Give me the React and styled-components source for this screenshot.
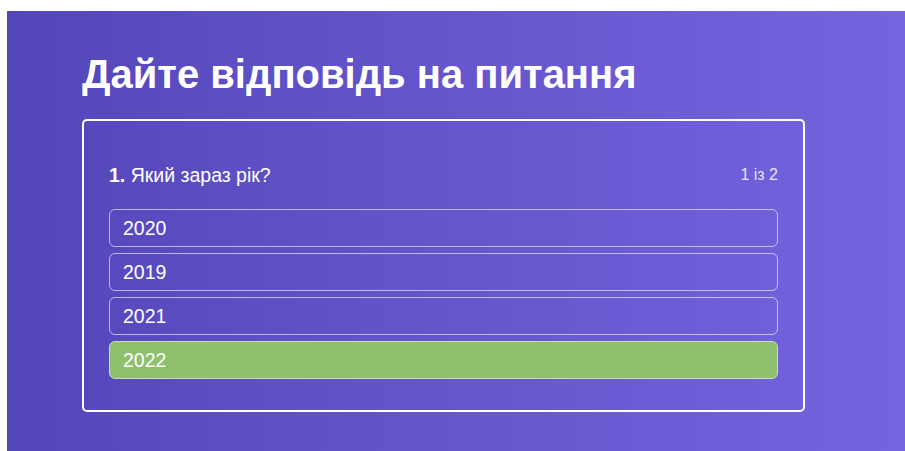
import React from "react";
import styled, { createGlobalStyle } from "styled-components";

const GlobalStyle = createGlobalStyle`
  body {
    margin: 0;
    background: #fff;
    font-family: "Liberation Sans", Arial, sans-serif;
  }
`;

const Page = styled.div`
  margin: 11px 0 0 7px;
  min-height: 440px;
  box-sizing: border-box;
  padding: 40px 0 0 75px;
  background: linear-gradient(90deg, #5346b9 0%, #6556cd 50%, #7464df 100%);
  color: #fff;
`;

const Title = styled.h1`
  margin: 0 0 22px;
  font-size: 40px;
  line-height: 46px;
  font-weight: 700;
`;

const Card = styled.div`
  width: 723px;
  box-sizing: border-box;
  border: 2px solid #fff;
  border-radius: 5px;
  padding: 40px 25px 31px;
`;

const QuestionRow = styled.div`
  display: flex;
  justify-content: space-between;
  align-items: center;
  margin-bottom: 20px;
`;

const Question = styled.div`
  font-size: 19.5px;
  line-height: 28px;

  b {
    font-weight: 700;
  }
`;

const Counter = styled.span`
  font-size: 16px;
  color: rgba(255, 255, 255, 0.85);
`;

const Options = styled.div`
  display: flex;
  flex-direction: column;
  gap: 6px;
`;

const Option = styled.div`
  height: 38px;
  box-sizing: border-box;
  display: flex;
  align-items: center;
  padding: 0 13px;
  border: 1px solid ${(p) => (p.$correct ? "#c8e0b8" : "rgba(255, 255, 255, 0.6)")};
  border-radius: 6px;
  background: ${(p) => (p.$correct ? "#8fc06d" : "transparent")};
  font-size: 19.5px;
`;

const answers = ["2020", "2019", "2021", "2022"];

export default function App() {
  return (
    <>
      <GlobalStyle />
      <Page>
        <Title>Дайте відповідь на питання</Title>
        <Card>
          <QuestionRow>
            <Question>
              <b>1.</b> Який зараз рік?
            </Question>
            <Counter>1 із 2</Counter>
          </QuestionRow>
          <Options>
            {answers.map((a) => (
              <Option key={a} $correct={a === "2022"}>
                {a}
              </Option>
            ))}
          </Options>
        </Card>
      </Page>
    </>
  );
}
